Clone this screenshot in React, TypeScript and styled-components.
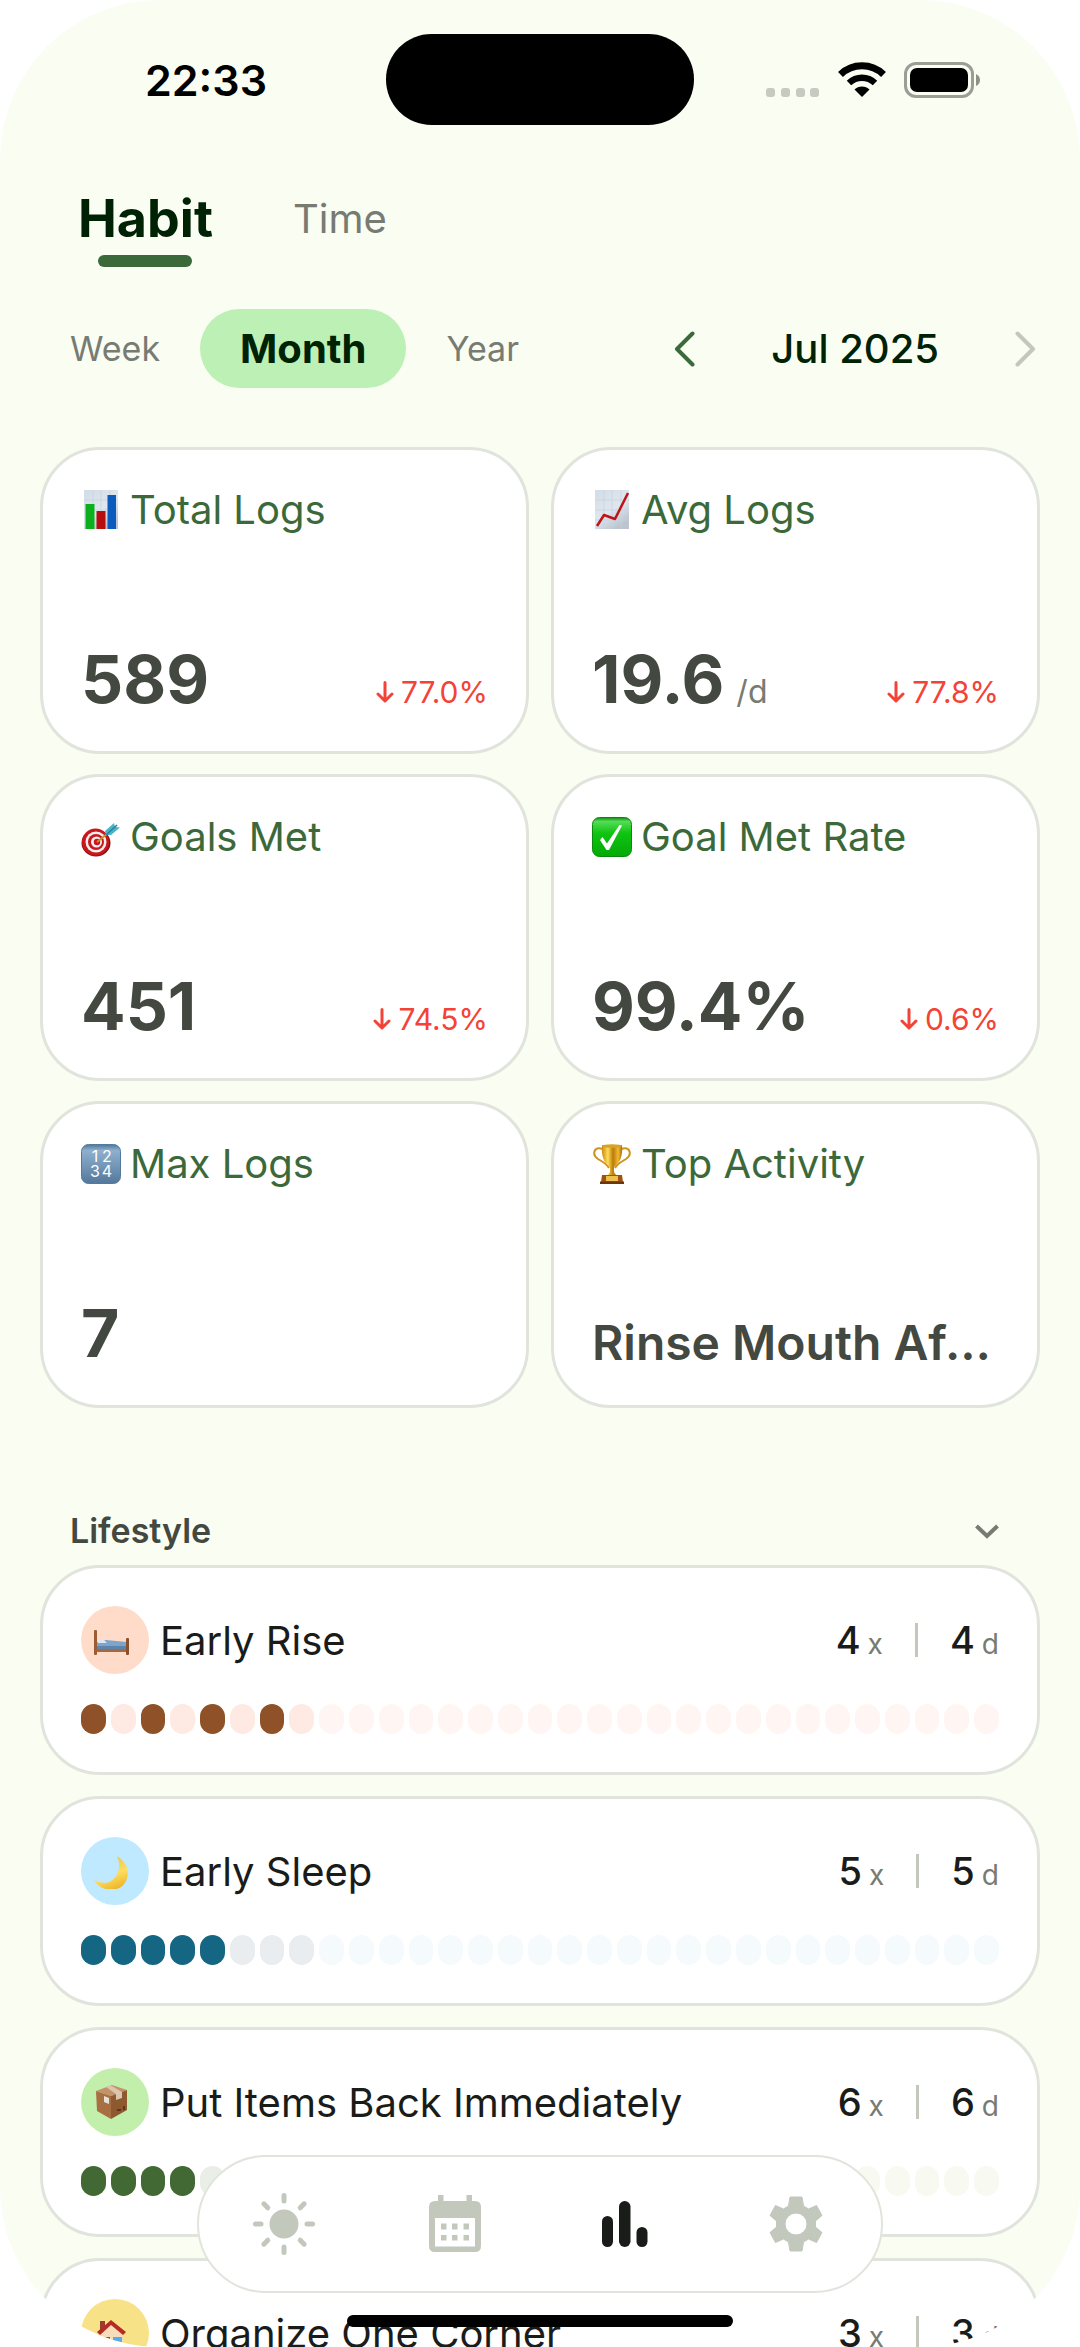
import React, { useState } from "react";
import styled, { createGlobalStyle } from "styled-components";

const color = {
  page: "#f9fdf2",
  card: "#ffffff",
  line: "#e1e4dc",
  ink: "#1a1c19",
  value: "#434840",
  deep: "#002204",
  green: "#3b6939",
  pill: "#bcf0b4",
  muted: "#777b72",
  faint: "#c3c8bd",
  red: "#f44336",
};

const GlobalStyle = createGlobalStyle`
  * { box-sizing: border-box; }
  body { margin: 0; background: #ffffff; font-family: Inter, Roboto, sans-serif; }
  button { font: inherit; color: inherit; border: 0; padding: 0; background: none; cursor: pointer; }
  h2, h3, p, ul { margin: 0; padding: 0; font-weight: inherit; list-style: none; }
  svg { display: block; flex: none; }
`;

const Screen = styled.div`
  position: relative;
  height: 100vh;
  overflow: hidden;
  border-radius: 160px;
  background: ${color.page};
  color: ${color.ink};
`;

const StatusBar = styled.header`
  display: grid;
  grid-template-columns: 1fr 308px 1fr;
  align-items: center;
  height: 159px;
`;

const Clock = styled.time`
  padding-left: 26px;
  text-align: center;
  font-size: 43px;
  font-weight: 600;
  color: #000;
`;

const Island = styled.div`
  height: 91px;
  border-radius: 46px;
  background: #000;
`;

const StatusIcons = styled.div`
  display: flex;
  align-items: flex-end;
  justify-content: flex-end;
  gap: 18px;
  padding-right: 100px;
`;

const Tabs = styled.div`
  display: flex;
  align-items: flex-start;
  gap: 80px;
  height: 80px;
  margin-top: 28px;
  padding: 0 78px;
`;

const Tab = styled.button<{ $active: boolean }>`
  display: flex;
  flex-direction: column;
  align-items: center;
  gap: 4px;
  line-height: 64px;
  font-size: ${(p) => (p.$active ? 52 : 40)}px;
  font-weight: ${(p) => (p.$active ? 700 : 400)};
  color: ${(p) => (p.$active ? color.deep : color.muted)};
`;

const TabLine = styled.span`
  width: 94px;
  height: 12px;
  border-radius: 6px;
  background: ${color.green};
`;

const FilterRow = styled.div`
  display: flex;
  align-items: center;
  justify-content: space-between;
  margin-top: 42px;
  padding: 0 44px 0 30px;
`;

const Ranges = styled.div`
  display: flex;
`;

const Range = styled.button<{ $active: boolean }>`
  height: 79px;
  padding: 0 40px;
  border-radius: 40px;
  font-size: ${(p) => (p.$active ? 40 : 34)}px;
  font-weight: ${(p) => (p.$active ? 700 : 400)};
  color: ${(p) => (p.$active ? color.deep : color.muted)};
  background: ${(p) => (p.$active ? color.pill : "transparent")};
`;

const Period = styled.div`
  display: flex;
  align-items: center;
  gap: 76px;
  font-size: 40px;
  font-weight: 500;
  color: ${color.deep};
`;

const StatGrid = styled.section`
  display: grid;
  grid-template-columns: 1fr 1fr;
  gap: 20px 22px;
  margin-top: 59px;
  padding: 0 40px;
`;

const Card = styled.article`
  border: 3px solid ${color.line};
  border-radius: 60px;
  background: ${color.card};
`;

const StatCard = styled(Card)`
  display: flex;
  flex-direction: column;
  justify-content: space-between;
  min-width: 0;
  height: 307px;
  padding: 36px 38px 32px;
`;

const StatTitle = styled.h2`
  display: flex;
  align-items: center;
  gap: 9px;
  line-height: 48px;
  font-size: 40px;
  color: ${color.green};
`;

const StatRow = styled.div`
  display: flex;
  align-items: baseline;
  justify-content: space-between;
`;

const StatValue = styled.p`
  white-space: nowrap;
  line-height: 80px;
  font-size: 66px;
  font-weight: 700;
  color: ${color.value};
`;

const StatText = styled.p`
  overflow: hidden;
  white-space: nowrap;
  text-overflow: ellipsis;
  line-height: 60px;
  font-size: 48px;
  font-weight: 600;
  color: ${color.value};
`;

const Unit = styled.span`
  margin-left: 12px;
  line-height: 40px;
  font-size: 32px;
  font-weight: 400;
  color: ${color.muted};
`;

const Trend = styled.p`
  display: flex;
  align-items: center;
  gap: 7px;
  font-size: 30px;
  color: ${color.red};
`;

const GroupHeader = styled.button`
  display: flex;
  align-items: center;
  justify-content: space-between;
  width: 100%;
  margin: 102px 0 13px;
  padding: 0 81px 0 70px;
  line-height: 42px;
  font-size: 34px;
  font-weight: 600;
  color: ${color.value};
`;

const HabitList = styled.ul`
  display: flex;
  flex-direction: column;
  gap: 21px;
  padding: 0 40px;
`;

const HabitCard = styled(Card)`
  display: flex;
  flex-direction: column;
  gap: 30px;
  padding: 38px;
`;

const HabitHead = styled.div`
  display: flex;
  align-items: center;
  gap: 11px;
`;

const Badge = styled.span<{ $bg: string }>`
  display: flex;
  align-items: center;
  width: 68px;
  height: 68px;
  padding-left: 13px;
  border-radius: 50%;
  background: ${(p) => p.$bg};
`;

const HabitName = styled.h3`
  flex: 1;
  font-size: 40px;
`;

const Counts = styled.div`
  display: flex;
  align-items: center;
  gap: 32px;
`;

const Count = styled.span`
  font-size: 38px;
  font-weight: 500;
`;

const CountUnit = styled.span`
  margin-left: 7px;
  font-size: 28px;
  font-weight: 400;
  color: ${color.muted};
`;

const Separator = styled.span`
  width: 3px;
  height: 34px;
  background: ${color.faint};
`;

const Days = styled.div`
  display: grid;
  grid-template-columns: repeat(31, 1fr);
  gap: 5px;
`;

const Day = styled.span<{ $fill: string }>`
  height: 30px;
  border-radius: 13px;
  background: ${(p) => p.$fill};
`;

const NavBar = styled.nav`
  position: absolute;
  bottom: 54px;
  left: 50%;
  display: grid;
  grid-template-columns: repeat(4, 1fr);
  width: 686px;
  height: 138px;
  transform: translateX(-50%);
  border: 2px solid ${color.line};
  border-radius: 69px;
  background: ${color.card};
`;

const NavButton = styled.button<{ $active: boolean }>`
  display: flex;
  align-items: center;
  justify-content: center;
  color: ${(p) => (p.$active ? color.ink : color.faint)};
`;

const HomeIndicator = styled.div`
  position: absolute;
  bottom: 20px;
  left: 50%;
  width: 386px;
  height: 12px;
  transform: translateX(-50%);
  border-radius: 6px;
  background: #000;
`;

/* ---- status bar drawings ---- */

const Signal = () => (
  <svg width="54" height="10" viewBox="0 0 54 10" fill="#c6cac0">
    {[0, 15, 30, 44].map((x) => (
      <rect key={x} x={x} width="9" height="9" rx="3" />
    ))}
  </svg>
);

const Wifi = () => (
  <svg width="48" height="36" viewBox="0 0 48 36" fill="none" stroke="#000">
    <path d="M2.5 12.5 A31 31 0 0 1 45.500 12.5" strokeWidth="7" />
    <path d="M11 21 A19 19 0 0 1 37 21" strokeWidth="6.500" />
    <path d="M24 35 L16.500 27.500 A10.600 10.600 0 0 1 31.500 27.500 Z" fill="#000" stroke="none" />
  </svg>
);

const Battery = () => (
  <svg width="76" height="36" viewBox="0 0 76 36">
    <rect x="1.5" y="1.5" width="67" height="33" rx="10.500" fill="none" stroke="#9a9e95" strokeWidth="3" />
    <rect x="6" y="6" width="58" height="24" rx="7" />
    <path d="M72 12 Q76 14 76 18 Q76 22 72 24 Z" fill="#8d9188" />
  </svg>
);

/* ---- small line icons ---- */

const Chevron = ({ dir, stroke }: { dir: "left" | "right"; stroke: string }) => (
  <svg width="21" height="36" viewBox="0 0 21 36" fill="none" stroke={stroke} strokeWidth="4" strokeLinecap="round" strokeLinejoin="round">
    <path d={dir === "left" ? "M18.500 2.500 L3 18 L18.500 33.500" : "M2.500 2.500 L18 18 L2.500 33.500"} />
  </svg>
);

const ChevronDown = () => (
  <svg width="24" height="15" viewBox="0 0 24 15" fill="none" stroke={color.muted} strokeWidth="4">
    <path d="M1.500 2 L12 12 L22.500 2" />
  </svg>
);

const ArrowDown = () => (
  <svg width="18" height="22" viewBox="0 0 18 22" fill="none" stroke={color.red} strokeWidth="3" strokeLinecap="round" strokeLinejoin="round">
    <path d="M9 1.500 V20 M2 13 L9 20 L16 13" />
  </svg>
);

/* ---- stat pictures ---- */

const Paper = () => (
  <>
    <linearGradient id="paper" x1="0" y1="0" x2="0.600" y2="1">
      <stop offset="0" stopColor="#d3dde6" />
      <stop offset="0.600" stopColor="#dfe6ee" />
      <stop offset="1" stopColor="#bcc4d0" />
    </linearGradient>
    <rect x="3" y="0" width="34" height="39" fill="url(#paper)" />
    <path d="M3 10 H37 M3 20 H37 M3 30 H37 M12 0 V39 M20 0 V39 M29 0 V39" stroke="#c6d2de" strokeWidth="0.700" />
  </>
);

const BarsPicture = () => (
  <svg width="40" height="40" viewBox="0 0 40 40">
    <Paper />
    <rect x="4.500" y="14" width="9" height="25" fill="#0cb01c" />
    <rect x="15.500" y="21" width="9" height="18" fill="#b80d10" />
    <rect x="26.500" y="5" width="8.500" height="34" fill="#0b5bbf" />
  </svg>
);

const TrendPicture = () => (
  <svg width="40" height="40" viewBox="0 0 40 40">
    <Paper />
    <path d="M5 36 L12 25 L23 29 L36 3" fill="none" stroke="#c01318" strokeWidth="2.500" strokeLinejoin="round" />
  </svg>
);

const TargetPicture = () => (
  <svg width="40" height="40" viewBox="0 0 40 40">
    <ellipse cx="15" cy="26" rx="14.500" ry="13.500" fill="#8e1014" />
    <circle cx="14.500" cy="25" r="13.500" fill="#c8171d" />
    <circle cx="15" cy="25" r="10.500" fill="#f4eeee" />
    <circle cx="15" cy="25" r="8" fill="#c8171d" />
    <circle cx="15.500" cy="25" r="5.500" fill="#f4eeee" />
    <circle cx="16" cy="25" r="3.200" fill="#c8171d" />
    <path d="M16 25 L31 13" stroke="#c79032" strokeWidth="2" />
    <path d="M24 14 L33 6 L34 10 L39 10.500 L30 18 L25 18 Z" fill="#48b5ca" />
    <path d="M25 18 L36 8" stroke="#2a7f9a" strokeWidth="1.500" />
  </svg>
);

const CheckPicture = () => (
  <svg width="40" height="40" viewBox="0 0 40 40">
    <linearGradient id="check" x1="0" y1="0" x2="0" y2="1">
      <stop offset="0" stopColor="#0b8f0d" />
      <stop offset="0.100" stopColor="#55dc56" />
      <stop offset="0.400" stopColor="#0fc412" />
      <stop offset="1" stopColor="#04a906" />
    </linearGradient>
    <rect x="0.500" y="0.500" width="39" height="39" rx="7" fill="url(#check)" stroke="#0a8a0c" />
    <path d="M8 23 L10.500 20 L15 26.500 L27.500 8 L30 8.500 L17 33 L14.500 33 Z" fill="#fff" />
  </svg>
);

const NumbersPicture = () => (
  <svg width="40" height="40" viewBox="0 0 40 40">
    <linearGradient id="numbers" x1="0" y1="0" x2="0" y2="1">
      <stop offset="0" stopColor="#4d759a" />
      <stop offset="0.150" stopColor="#8fb0cd" />
      <stop offset="0.550" stopColor="#7496b7" />
      <stop offset="1" stopColor="#53789b" />
    </linearGradient>
    <rect x="0.500" y="0.500" width="39" height="39" rx="7" fill="url(#numbers)" stroke="#547a9d" />
    <g fill="#fff" fontSize="16" fontFamily="Inter" textAnchor="middle">
      <text x="14" y="18">1</text>
      <text x="26" y="18">2</text>
      <text x="14" y="33">3</text>
      <text x="26" y="33">4</text>
    </g>
  </svg>
);

const TrophyPicture = () => (
  <svg width="40" height="40" viewBox="0 0 40 40">
    <linearGradient id="trophy">
      <stop offset="0" stopColor="#c98a14" />
      <stop offset="0.300" stopColor="#ffdc55" />
      <stop offset="0.550" stopColor="#b97c0c" />
      <stop offset="0.800" stopColor="#f2b92e" />
      <stop offset="1" stopColor="#a96c0a" />
    </linearGradient>
    <path d="M11 5 C1 2 0 11 6 15 C11 18 15 20 17 24 M29 5 C39 2 40 11 34 15 C29 18 25 20 23 24" fill="none" stroke="#cf941c" strokeWidth="2" />
    <path d="M10 1 H30 C31 12 28 19 22 23 V28 L25 32 H15 L18 28 V23 C12 19 9 12 10 1 Z" fill="url(#trophy)" />
    <ellipse cx="20" cy="2" rx="10" ry="1.800" fill="#d9a127" />
    <path d="M10 31 H30 L31 38 H9 Z" fill="#9c5410" />
    <rect x="14" y="32" width="12" height="5" fill="#efc04a" />
    <rect x="8" y="37.500" width="24" height="2.500" fill="#6f360b" />
  </svg>
);

/* ---- habit pictures ---- */

const Bed = () => (
  <svg width="36" height="34" viewBox="0 0 36 34">
    <path d="M2 19 L12 17 L33 19 V26 H2 Z" fill="#7da5cc" />
    <path d="M3 17 H10 L13 20 H4 Z" fill="#dfe8f0" />
    <path d="M3 23 H33 V26 H3 Z" fill="#5d84ab" />
    <path d="M1 26 H34 V29 H1 Z" fill="#a5683f" />
    <rect x="0" y="7" width="3" height="25" rx="1" fill="#9a5b35" />
    <rect x="32" y="15" width="3" height="17" rx="1" fill="#8a4f2d" />
  </svg>
);

const Moon = () => (
  <svg width="36" height="36" viewBox="0 0 36 36">
    <linearGradient id="moon" x1="0.200" y1="0" x2="0.600" y2="1">
      <stop offset="0" stopColor="#e6bd3c" />
      <stop offset="0.600" stopColor="#ffdd5e" />
      <stop offset="1" stopColor="#edb62b" />
    </linearGradient>
    <path d="M23 3 C36 11 37 26 27 34 C17 40 4 36 0 26 C7 32 17 31 22 23 C26 17 26 10 23 3 Z" fill="url(#moon)" />
  </svg>
);

const Box = () => (
  <svg width="36" height="36" viewBox="0 0 36 36">
    <path d="M2 7 L18 1 L33 6 L17 12 Z" fill="#c4926a" />
    <path d="M2 7 L17 12 V35 L3 27 Z" fill="#a86f42" />
    <path d="M17 12 L33 6 V26 L17 35 Z" fill="#8f5930" />
    <path d="M12 3 L17 1.500 L28 8 V14 L22 16 V10 Z" fill="#dcc5ae" />
    <path d="M10 12 L15 14 V20 L10 18 Z" fill="#e4e0db" />
    <path d="M23 25 H27 V27 H23 Z M29 22 H31 V26 H29 Z" fill="#5e3516" />
  </svg>
);

const House = () => (
  <svg width="36" height="36" viewBox="0 0 36 36">
    <rect x="6" y="6" width="5" height="10" fill="#9b3c2d" />
    <path d="M5 19 L17 8 L29 19 V36 H5 Z" fill="#f6dcb8" />
    <path d="M17 5 L32 17 L29 20 L17 10 L6 20 L3 17 Z" fill="#b52c27" />
    <rect x="8" y="22" width="8" height="14" fill="#7a5547" />
    <rect x="19" y="22" width="9" height="8" fill="#55acef" />
  </svg>
);

/* ---- navigation icons ---- */

const SunIcon = () => (
  <svg width="64" height="64" viewBox="0 0 64 64" fill="currentColor" stroke="currentColor" strokeWidth="5" strokeLinecap="round">
    <circle cx="32" cy="32" r="14.500" stroke="none" />
    {[0, 45, 90, 135, 180, 225, 270, 315].map((a) => (
      <path key={a} d="M32 3.500 V9" transform={`rotate(${a} 32 32)`} />
    ))}
  </svg>
);

const CalendarIcon = () => (
  <svg width="52" height="58" viewBox="0 0 52 58" fill="currentColor">
    <path fillRule="evenodd" d="M9 0 H14.500 V6 H37.500 V0 H43 V6 H46 Q52 6 52 12 V51 Q52 57 46 57 H6 Q0 57 0 51 V12 Q0 6 6 6 H9 Z M6 23 V51.500 H46 V23 Z" />
    {[12, 23, 34.5].map((x) => (
      <g key={x}>
        <rect x={x} y="28.500" width="5.500" height="6" />
        <rect x={x} y="40" width="5.500" height="5.500" />
      </g>
    ))}
  </svg>
);

const ChartIcon = () => (
  <svg width="46" height="46" viewBox="0 0 46 46" fill="currentColor">
    <rect x="0" y="15" width="11" height="31" rx="5.500" />
    <rect x="17" y="0" width="11.500" height="46" rx="5.700" />
    <rect x="34.500" y="26" width="11" height="20" rx="5.500" />
  </svg>
);

const GearIcon = () => (
  <svg width="54" height="56" viewBox="0 0 54 56" fill="currentColor">
    <path
      fillRule="evenodd"
      strokeLinejoin="round"
      stroke="currentColor"
      strokeWidth="1"
      d="M21 1 H33 L34.500 10 L39.500 13 L47.500 9.500 L53 19.500 L46.500 25 V31 L53 36.500 L47.500 46.500 L39.500 43 L34.500 46 L33 55 H21 L19.500 46 L14.500 43 L6.500 46.500 L1 36.500 L7.500 31 V25 L1 19.500 L6.500 9.500 L14.500 13 L19.500 10 Z M27 17 A11 11 0 1 0 27 39 A11 11 0 1 0 27 17 Z"
    />
  </svg>
);

/* ---- data ---- */

type Stat = { title: string; value: string; picture: React.ReactNode; unit?: string; trend?: string; text?: boolean };

const stats: Stat[] = [
  { title: "Total Logs", value: "589", trend: "77.0%", picture: <BarsPicture /> },
  { title: "Avg Logs", value: "19.6", unit: "/d", trend: "77.8%", picture: <TrendPicture /> },
  { title: "Goals Met", value: "451", trend: "74.5%", picture: <TargetPicture /> },
  { title: "Goal Met Rate", value: "99.4%", trend: "0.6%", picture: <CheckPicture /> },
  { title: "Max Logs", value: "7", picture: <NumbersPicture /> },
  { title: "Top Activity", value: "Rinse Mouth After Meals", text: true, picture: <TrophyPicture /> },
];

type Habit = {
  name: string;
  times: number;
  days: number;
  badge: string;
  done: string;
  missed: string;
  future: string;
  logged: number[];
  picture: React.ReactNode;
};

const TODAY = 8;

const habits: Habit[] = [
  { name: "Early Rise", times: 4, days: 4, badge: "#ffdbc9", done: "#8f5127", missed: "#ffe9e3", future: "#fff6f4", logged: [1, 3, 5, 7], picture: <Bed /> },
  { name: "Early Sleep", times: 5, days: 5, badge: "#bee9ff", done: "#146683", missed: "#e9edf0", future: "#f5fafd", logged: [1, 2, 3, 4, 5], picture: <Moon /> },
  { name: "Put Items Back Immediately", times: 6, days: 6, badge: "#c3efad", done: "#426834", missed: "#e9efe6", future: "#f8faf1", logged: [1, 2, 3, 4, 6, 7], picture: <Box /> },
  { name: "Organize One Corner", times: 3, days: 3, badge: "#f8e287", done: "#6d5e0f", missed: "#f3eee0", future: "#fcf9ee", logged: [1, 2, 3], picture: <House /> },
];

const navItems = [
  { label: "Today", icon: <SunIcon /> },
  { label: "Calendar", icon: <CalendarIcon /> },
  { label: "Statistics", icon: <ChartIcon /> },
  { label: "Settings", icon: <GearIcon /> },
];

const dayFill = (h: Habit, day: number) => (h.logged.includes(day) ? h.done : day <= TODAY ? h.missed : h.future);

export default function App() {
  const [tab, setTab] = useState("Habit");
  const [range, setRange] = useState("Month");
  const [page, setPage] = useState("Statistics");
  const [open, setOpen] = useState(true);

  return (
    <Screen>
      <GlobalStyle />
      <StatusBar>
        <Clock>22:33</Clock>
        <Island />
        <StatusIcons>
          <Signal />
          <Wifi />
          <Battery />
        </StatusIcons>
      </StatusBar>

      <main>
        <Tabs>
          {["Habit", "Time"].map((name) => (
            <Tab key={name} $active={tab === name} onClick={() => setTab(name)}>
              {name}
              {tab === name && <TabLine />}
            </Tab>
          ))}
        </Tabs>

        <FilterRow>
          <Ranges>
            {["Week", "Month", "Year"].map((name) => (
              <Range key={name} $active={range === name} onClick={() => setRange(name)}>
                {name}
              </Range>
            ))}
          </Ranges>
          <Period>
            <button aria-label="Previous month">
              <Chevron dir="left" stroke={color.green} />
            </button>
            <span>Jul 2025</span>
            <button aria-label="Next month">
              <Chevron dir="right" stroke={color.faint} />
            </button>
          </Period>
        </FilterRow>

        <StatGrid>
          {stats.map((s) => (
            <StatCard key={s.title}>
              <StatTitle>
                {s.picture}
                {s.title}
              </StatTitle>
              {s.text ? (
                <StatText>{s.value}</StatText>
              ) : (
                <StatRow>
                  <StatValue>
                    {s.value}
                    {s.unit && <Unit>{s.unit}</Unit>}
                  </StatValue>
                  {s.trend && (
                    <Trend>
                      <ArrowDown />
                      {s.trend}
                    </Trend>
                  )}
                </StatRow>
              )}
            </StatCard>
          ))}
        </StatGrid>

        <GroupHeader aria-expanded={open} onClick={() => setOpen(!open)}>
          Lifestyle
          <ChevronDown />
        </GroupHeader>

        {open && (
          <HabitList>
            {habits.map((h) => (
              <li key={h.name}>
                <HabitCard>
                  <HabitHead>
                    <Badge $bg={h.badge}>{h.picture}</Badge>
                    <HabitName>{h.name}</HabitName>
                    <Counts>
                      <Count>
                        {h.times}
                        <CountUnit>x</CountUnit>
                      </Count>
                      <Separator />
                      <Count>
                        {h.days}
                        <CountUnit>d</CountUnit>
                      </Count>
                    </Counts>
                  </HabitHead>
                  <Days>
                    {Array.from({ length: 31 }, (_, i) => (
                      <Day key={i} $fill={dayFill(h, i + 1)} />
                    ))}
                  </Days>
                </HabitCard>
              </li>
            ))}
          </HabitList>
        )}
      </main>

      <NavBar aria-label="Main">
        {navItems.map((item) => (
          <NavButton key={item.label} aria-label={item.label} $active={page === item.label} onClick={() => setPage(item.label)}>
            {item.icon}
          </NavButton>
        ))}
      </NavBar>
      <HomeIndicator />
    </Screen>
  );
}
